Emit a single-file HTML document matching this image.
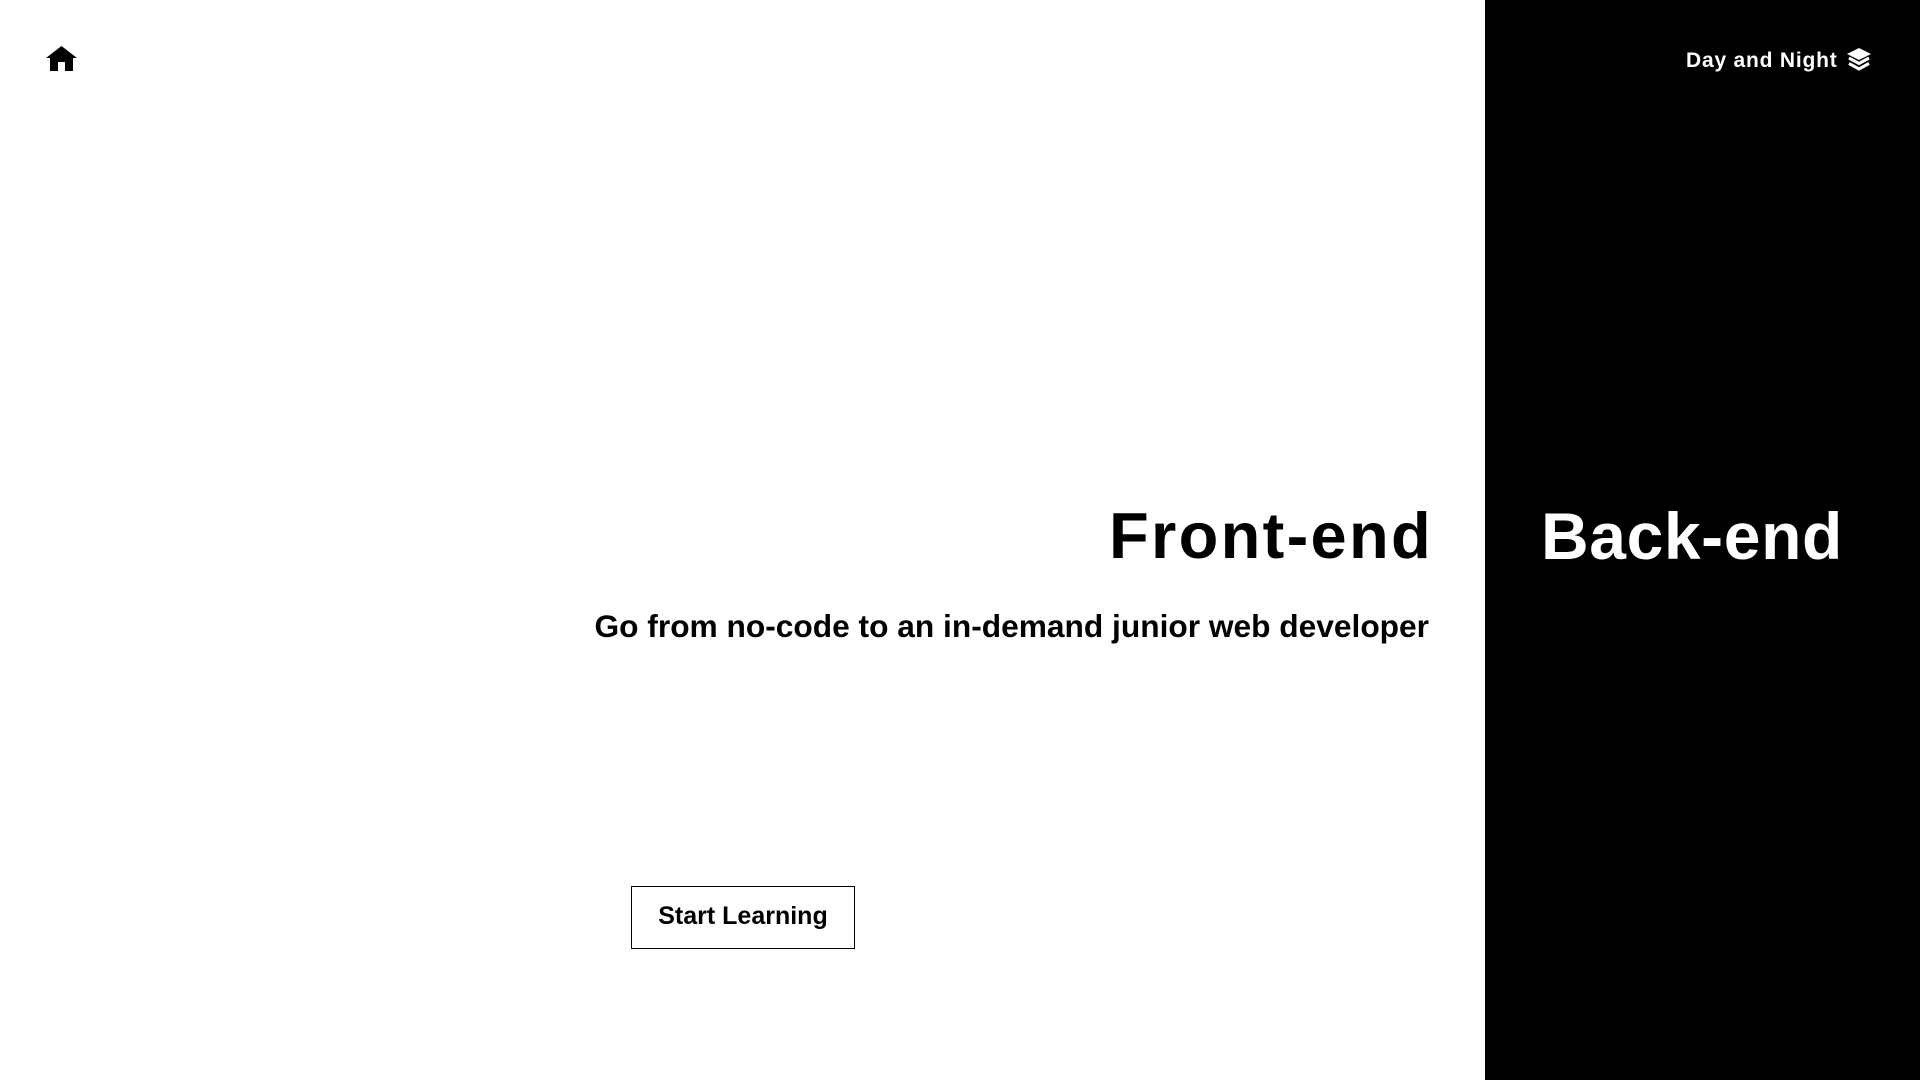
<!DOCTYPE html>
<html><head><meta charset="utf-8"><style>
html,body{margin:0;padding:0;width:1920px;height:1080px;overflow:hidden;background:#fff;font-family:"Liberation Sans",sans-serif;font-weight:bold}
.a{position:absolute;line-height:1;white-space:nowrap}
#panel{position:absolute;left:1485px;top:0;width:435px;height:1080px;background:#000}
</style></head><body>
<div id="panel"></div>
<svg class="a" style="left:46px;top:46px" width="31" height="25" viewBox="0 0 31 25"><path d="M15.5 0 L31 12 L27 12 L27 25 L19 25 L19 16 L12 16 L12 25 L4 25 L4 12 L0 12 Z" fill="#000"/></svg>
<div class="a" style="left:1686px;top:50px;font-size:21px;color:#fff;letter-spacing:0.8px">Day and Night</div>
<svg class="a" style="left:1847px;top:48px" width="24" height="23" viewBox="0 0 24 23"><path d="M12 0 L24 6 L12 12 L0 6 Z" fill="#fff"/><path d="M2 10 L12 15.5 L22 10" fill="none" stroke="#fff" stroke-width="3"/><path d="M2 15.5 L12 21 L22 15.5" fill="none" stroke="#fff" stroke-width="3"/></svg>
<div class="a" style="right:487px;top:503px;font-size:65px;letter-spacing:2.3px">Front-end</div>
<div class="a" style="left:1541px;top:503px;font-size:66px;color:#fff;letter-spacing:0.6px">Back-end</div>
<div class="a" style="right:491px;top:611px;font-size:31.7px">Go from no-code to an in-demand junior web developer</div>
<div class="a" style="left:631px;top:886px;width:222px;height:61px;border:1px solid #000"></div>
<div class="a" style="left:631px;top:904px;width:224px;text-align:center;font-size:25px">Start Learning</div>
</body></html>
